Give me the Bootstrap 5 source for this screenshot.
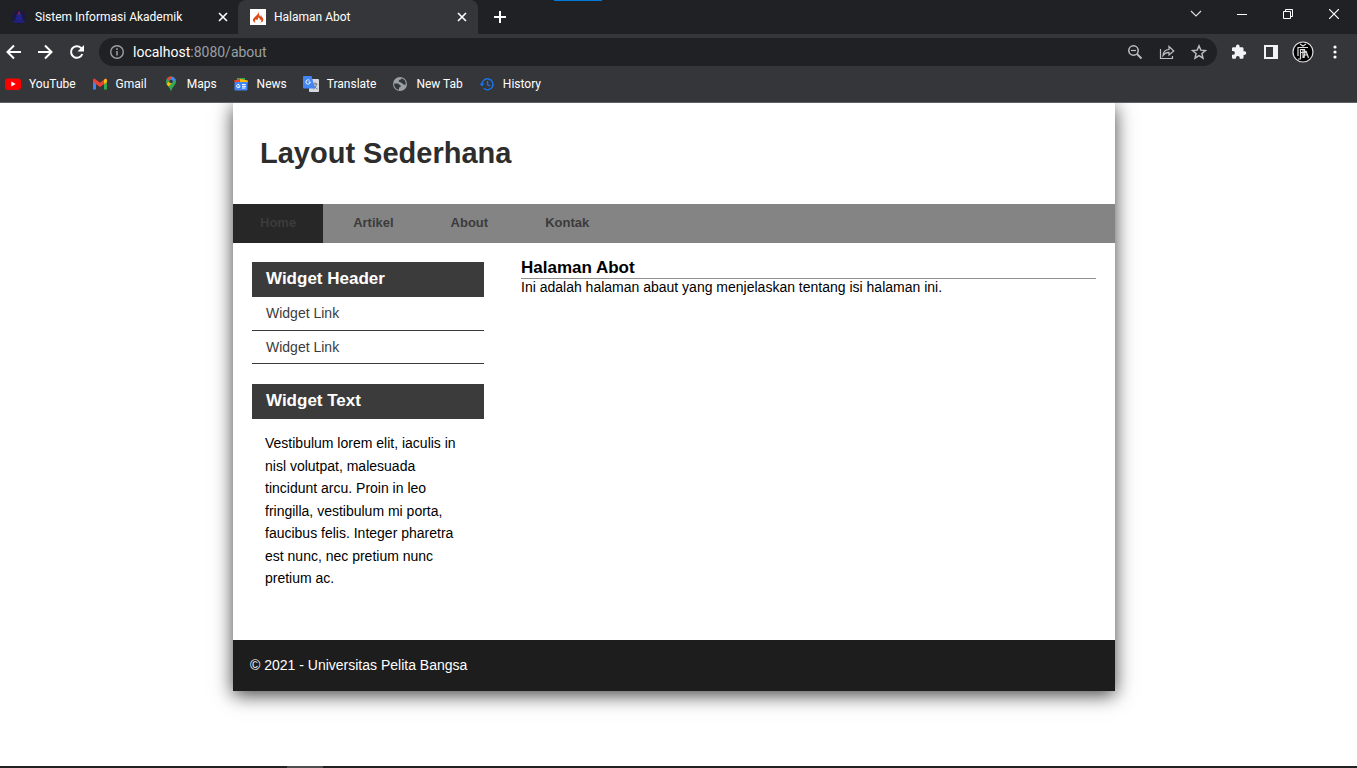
<!DOCTYPE html>
<html lang="id">
<head>
<meta charset="utf-8">
<meta name="viewport" content="width=device-width, initial-scale=1">
<title>Halaman Abot</title>
<link href="https://cdn.jsdelivr.net/npm/bootstrap@5.3.0/dist/css/bootstrap.min.css" rel="stylesheet">
<style>
  body { font-family: "Liberation Sans", Arial, sans-serif; font-size: 14px; color: #000; background: #fff; }
  .chrome { font-family: Roboto, "Open Sans", sans-serif; font-size: 12px; line-height: 16px; background: #35363a; color: #fff; border-bottom: 1px solid #5f6064; }
  .chrome button { border: 0; background: none; color: inherit; padding: 0; display: flex; align-items: center; justify-content: center; }
  .chrome svg, .chrome button { flex: none; }
  .tabstrip { background: #202124; height: 34px; }
  .tab-item { width: 240px; height: 34px; padding: 0 8px 0 12px; }
  .tab-item.first-tab { width: 238px; padding: 0 7px 0 11px; }
  .tab-item.active-tab { background: #35363a; border-radius: 8px 8px 0 0; }
  .tab-item button { width: 16px; height: 16px; }
  .loading-mark { left: 554px; top: 0; width: 48px; height: 1px; background: #0078d7; }
  .win-btn { width: 46px; height: 28px; }
  .toolbar { padding: 4px 6px 4px 0; gap: 0; }
  .nav-btn { width: 32px; height: 28px; }
  .nav-btn.back-btn { width: 29px; padding-right: 2px; }
  .omnibox { height: 28px; border-radius: 14px; background: #202124; padding: 0 10px; margin: 0 6px; }
  .url-text { font-size: 14px; line-height: 20px; }
  .url-rest { color: #9aa0a6; }
  .bookmarks { height: 32px; padding: 0 5px 4px; gap: 16px; }
  .bookmarks a { color: #fff; text-decoration: none; display: flex; align-items: center; gap: 8px; }
  .viewport { padding-right: 9px; padding-bottom: 32px; overflow: hidden; }
  .page { max-width: 882px; background: #fff; box-shadow: 0 4px 18px rgba(0,0,0,.75); }
  .page-head { padding: 30px 27px 31px; }
  .page-head h1 { font-size: 29px; line-height: 40px; font-weight: 700; color: #2d2d2d; margin: 0; }
  .site-nav { background: #848484; gap: 3px; }
  .site-nav a { display: block; padding: 9px 27px 10px; font-size: 13px; line-height: 20px; font-weight: 700; color: #3b3b3b; text-decoration: none; }
  .site-nav a.current { background: #272727; }
  .content { padding: 19px 19px 37px; gap: 37px; }
  .sidebar { width: 232px; flex: none; gap: 20px; }
  .widget h3 { background: #3b3b3b; color: #fff; font-size: 17px; line-height: 20px; font-weight: 700; padding: 7px 14px 8px; margin: 0; }
  .widget li a { display: block; padding: 6px 14px; line-height: 21px; color: #3b3b3b; text-decoration: none; border-bottom: 1px solid #3b3b3b; }
  .widget li:last-child a { padding-bottom: 5px; }
  .widget p { padding: 13px; margin: 0; line-height: 1.61; }
  .article h2 { font-size: 17px; line-height: 20px; font-weight: 700; margin: -4px 0 0; }
  .article hr { margin: 0; border: 0; border-top: 1px solid #8f8f8f; opacity: 1; }
  .article p { margin: 0; line-height: 17px; }
  .page-foot { background: #1d1d1d; color: #fff; padding: 15px 17px 16px; line-height: 20px; }
  .taskbar { height: 2px; background: #222; padding-left: 287px; }
  .taskbar div { width: 36px; height: 2px; background: #4f4f4f; }
</style>
</head>
<body class="d-flex flex-column min-vh-100">
<header class="chrome">
  <div class="tabstrip d-flex position-relative">
    <div class="tab-item first-tab d-flex align-items-center">
      <svg width="16" height="16" viewBox="0 0 16 16"><circle cx="8" cy="8" r="6.800" fill="#1a1845"/><path d="M5.500 5h5v3l1 1v2h-7V9l1-1zM2.500 11.500h11v2h-11z" fill="#22228a"/><path d="M7.300 2.500h1.600l.3 3H7z" fill="#8e2132"/></svg>
      <span class="flex-fill ps-2 tab-title">Sistem Informasi Akademik</span>
      <button aria-label="Tutup tab"><svg width="10" height="10" viewBox="0 0 10 10"><path d="M1 1l8 8M9 1L1 9" stroke="#fff" stroke-width="1.6"/></svg></button>
    </div>
    <div class="tab-item active-tab d-flex align-items-center">
      <svg width="16" height="16" viewBox="0 0 16 16"><path fill="#fff" d="M0 0h16v16H0z"/><path d="M7 2c2 1.500 1 3-.3 4.300C5 8 2.500 9.500 3 11.500c.3 1.200 1.300 2 2.700 2.300C4.500 12.500 4.800 11 6 10c.2 1 .8 1.200 1.300.8C8.500 10 8 8.800 7.800 8.200 9.500 8.800 10 9.800 9.800 11c.6.1 1-.2 1.100-.7.8 1.200.5 2.600-.9 3.500 2-.3 3.300-1.500 3.300-3.200 0-2-2-2.800-2.200-4.600-.6.400-.6 1.200-.5 1.700C8.500 6.500 9.800 4 7 2z" fill="#dd4814"/></svg>
      <span class="flex-fill ps-2 tab-title">Halaman Abot</span>
      <button aria-label="Tutup tab"><svg width="10" height="10" viewBox="0 0 10 10"><path d="M1 1l8 8M9 1L1 9" stroke="#fff" stroke-width="1.6"/></svg></button>
    </div>
    <button class="ms-3" aria-label="Tab baru"><svg width="12" height="12" viewBox="0 0 12 12"><path d="M6 0v12M0 6h12" stroke="#fff" stroke-width="2"/></svg></button>
    <div class="loading-mark position-absolute"></div>
    <div class="ms-auto d-flex">
      <button class="win-btn" aria-label="Cari tab"><svg width="12" height="8" viewBox="0 0 12 8"><path d="M1 1l5 5 5-5" fill="none" stroke="#ddd" stroke-width="1.200"/></svg></button>
      <button class="win-btn" aria-label="Minimalkan"><svg width="10" height="10" viewBox="0 0 10 10"><path d="M0 5.500h10" stroke="#fff"/></svg></button>
      <button class="win-btn" aria-label="Pulihkan"><svg width="10" height="10" viewBox="0 0 10 10"><path d="M.5 2.500h7v7h-7zM2.500 2.500v-2h7v7h-2" fill="none" stroke="#fff"/></svg></button>
      <button class="win-btn" aria-label="Tutup"><svg width="10" height="10" viewBox="0 0 10 10"><path d="M0 0l10 10M10 0L0 10" stroke="#fff" stroke-width="1.200"/></svg></button>
    </div>
  </div>
  <div class="toolbar d-flex align-items-center">
    <button class="nav-btn back-btn" aria-label="Kembali"><svg width="16" height="16" viewBox="0 0 16 16"><path d="M15 8H2M8 1.500L1.500 8 8 14.500" fill="none" stroke="#fff" stroke-width="2"/></svg></button>
    <button class="nav-btn" aria-label="Maju"><svg width="16" height="16" viewBox="0 0 16 16"><path d="M1 8h13M8 1.500L14.500 8 8 14.500" fill="none" stroke="#fff" stroke-width="2"/></svg></button>
    <button class="nav-btn" aria-label="Muat ulang"><svg width="16" height="16" viewBox="0 0 16 16"><path d="M13.300 10A5.800 5.800 0 1 1 12 3.900L14 6" fill="none" stroke="#fff" stroke-width="2"/><path d="M15 1v6.500H8.500z" fill="#fff"/></svg></button>
    <div class="omnibox flex-fill d-flex align-items-center">
      <svg width="16" height="16" viewBox="0 0 16 16"><circle cx="8" cy="8" r="6.300" fill="none" stroke="#9aa0a6" stroke-width="1.400"/><path d="M8 7v4.500M8 4.300V6" stroke="#9aa0a6" stroke-width="1.500"/></svg>
      <a href="#" class="url-text text-white text-decoration-none ps-2">localhost<span class="url-rest">:8080/about</span></a>
      <div class="ms-auto d-flex gap-3">
        <button aria-label="Zoom"><svg width="16" height="16" viewBox="0 0 16 16"><circle cx="6.500" cy="6.500" r="4.700" fill="none" stroke="#bdc1c6" stroke-width="1.500"/><path d="M10 10l4.500 4.500" stroke="#bdc1c6" stroke-width="1.800"/><path d="M4 6.500h5" stroke="#bdc1c6" stroke-width="1.200"/></svg></button>
        <button aria-label="Bagikan"><svg width="16" height="16" viewBox="0 0 16 16"><path d="M1.500 5v9.500h12V12M4 11.500C4.300 7.500 6.500 5.700 10 5.500V2.500L14.800 7 10 11V8.300C7.300 8.300 5.500 9.300 4 11.500z" fill="none" stroke="#bdc1c6" stroke-width="1.200"/></svg></button>
        <button aria-label="Markah"><svg width="16" height="16" viewBox="0 0 16 16"><path d="M8 1.800l1.800 4.300 4.700.4-3.600 3 1.100 4.700L8 11.700l-4 2.500 1.100-4.700-3.600-3 4.700-.4z" fill="none" stroke="#bdc1c6" stroke-width="1.400"/></svg></button>
      </div>
    </div>
    <button class="nav-btn" aria-label="Ekstensi"><svg width="16" height="16" viewBox="0 0 16 16"><path d="M13.500 7.300h-1V4.500c0-.7-.6-1.300-1.300-1.300H8.600V2.300a1.800 1.800 0 0 0-3.600 0v.9H2.300C1.600 3.200 1 3.800 1 4.500V7h1a1.900 1.900 0 0 1 0 3.800H1v2.700c0 .7.600 1.300 1.300 1.300h2.600v-1a1.900 1.900 0 0 1 3.800 0v1h2.500c.7 0 1.300-.6 1.300-1.300v-2.600h1a1.800 1.800 0 0 0 0-3.600z" fill="#f1f3f4"/></svg></button>
    <button class="nav-btn" aria-label="Panel samping"><svg width="14" height="14" viewBox="0 0 14 14"><path d="M0 0h14v14H0zM2 2v10h7V2z" fill="#f1f3f4" fill-rule="evenodd"/></svg></button>
    <button class="nav-btn" aria-label="Profil"><svg width="22" height="22" viewBox="0 0 22 22"><circle cx="11" cy="11" r="10" fill="#000" stroke="#ddd" stroke-width="1.200"/><path d="M8 3l3 2 3-2M6 6.500h10M6 6v9M8.500 8.500h4v3h-4zM8.500 12v6H6M11 9v8M12 17c.5-5 1-6 2-7M14 10l2.500 7M12.500 14h3" fill="none" stroke="#ddd" stroke-width="1.200"/></svg></button>
    <button class="nav-btn" aria-label="Menu"><svg width="4" height="14" viewBox="0 0 4 14" fill="#fff"><circle cx="2" cy="2" r="1.600"/><circle cx="2" cy="7" r="1.600"/><circle cx="2" cy="12" r="1.600"/></svg></button>
  </div>
  <nav class="bookmarks d-flex" aria-label="Markah">
    <a href="#"><svg width="16" height="16" viewBox="0 0 16 16"><rect y="2.500" width="16" height="11.500" rx="3" fill="#f00"/><path d="M6.300 5.600v5l4.400-2.500z" fill="#fff"/></svg>YouTube</a>
    <a href="#"><svg width="16" height="16" viewBox="0 0 16 16"><path d="M1 4v9.500h3V6z" fill="#4285f4"/><path d="M15 4v9.500h-3V6z" fill="#34a853"/><path d="M1 3.500L2.500 2.500 8 6.800l5.500-4.300L15 3.500V6l-7 5-7-5z" fill="#ea4335"/><path d="M12 4l1.500-1.500L15 4v2l-3 2z" fill="#fbbc04"/></svg>Gmail</a>
    <a href="#"><svg width="16" height="16" viewBox="0 0 16 16"><path d="M8 .5a5 5 0 0 1 5 5C13 9 9 11 8 15.500 7 11 3 9 3 5.500a5 5 0 0 1 5-5z" fill="#34a853"/><path d="M3.900 2.600A5 5 0 0 1 8 .5L9.500.8 6 5z" fill="#ea4335"/><path d="M9.500.8a5 5 0 0 1 3 2.600L9 7 7 4z" fill="#4285f4"/><path d="M3.500 8L7 4.500 9 7 5.500 10.500z" fill="#fbbc04"/><circle cx="8" cy="5.500" r="1.800" fill="#35363a"/></svg>Maps</a>
    <a href="#"><svg width="16" height="16" viewBox="0 0 16 16"><path d="M4 2h8v5H4z" fill="#34a853"/><path d="M1 4.500l8-2 2 5H2z" fill="#ea4335"/><path d="M7 3l8 1.500-1 4H7z" fill="#fbbc04"/><rect x="1.500" y="6" width="13" height="8.500" rx="1" fill="#4285f4"/><path d="M7 10H5.500M6.900 10A1.600 1.600 0 1 1 6.300 8.800M9 8.500h3.500M9 10.300h4M9 12h3.500" fill="none" stroke="#fff"/></svg>News</a>
    <a href="#"><svg width="16" height="16" viewBox="0 0 16 16"><rect x="6" y="3" width="10" height="13" rx="1" fill="#d5d8dc"/><path d="M9.500 8h5M12 6.500V8M13.500 8c-.5 2.500-1.500 4-3 5M11 9.500c1 2 2 3 3.500 3.500" fill="none" stroke="#70757a"/><path d="M1 0h7.500L12 12.500H1a1 1 0 0 1-1-1V1a1 1 0 0 1 1-1z" fill="#4285f4"/><path d="M5.500 6H7.300A2.200 2.200 0 1 1 6.500 4.300" fill="none" stroke="#fff"/></svg>Translate</a>
    <a href="#"><svg width="16" height="16" viewBox="0 0 16 16"><circle cx="8" cy="8" r="7" fill="#9aa0a6"/><path d="M2.200 7.500h3.300c1.500 0 1.500 1.700 3 1.700.8 1.500-.2 2-1.500 2.300V13.800C4 13.500 2 11 2.200 7.500zM9.500 2.300c0 1.800-2.700 1-2.700 2.700 0 1.500 2 1 3 2s2 2.300 4 1.500C14 5 12 3 9.500 2.300z" fill="#35363a"/></svg>New Tab</a>
    <a href="#"><svg width="16" height="16" viewBox="0 0 16 16"><path d="M3 8.500a5.500 5.500 0 1 1 1.700 3.800M8.500 5v3.500l2.500 1.500" fill="none" stroke="#1a73e8" stroke-width="1.400"/><path d="M.5 7.500h5L3 10.500z" fill="#1a73e8"/></svg>History</a>
  </nav>
</header>

<main class="viewport flex-fill">
  <div class="page mx-auto">
    <header class="page-head"><h1>Layout Sederhana</h1></header>
    <nav class="site-nav d-flex">
      <a href="#" class="current">Home</a>
      <a href="#">Artikel</a>
      <a href="#">About</a>
      <a href="#">Kontak</a>
    </nav>
    <div class="content d-flex">
      <aside class="sidebar d-flex flex-column">
        <section class="widget">
          <h3>Widget Header</h3>
          <ul class="list-unstyled mb-0">
            <li><a href="#">Widget Link</a></li>
            <li><a href="#">Widget Link</a></li>
          </ul>
        </section>
        <section class="widget">
          <h3>Widget Text</h3>
          <p>Vestibulum lorem elit, iaculis in nisl volutpat, malesuada tincidunt arcu. Proin in leo fringilla, vestibulum mi porta, faucibus felis. Integer pharetra est nunc, nec pretium nunc pretium ac.</p>
        </section>
      </aside>
      <section class="article flex-fill">
        <h2>Halaman Abot</h2>
        <hr>
        <p>Ini adalah halaman abaut yang menjelaskan tentang isi halaman ini.</p>
      </section>
    </div>
    <footer class="page-foot">© 2021 - Universitas Pelita Bangsa</footer>
  </div>
</main>
<div class="taskbar"><div></div></div>
<script src="https://cdn.jsdelivr.net/npm/bootstrap@5.3.0/dist/js/bootstrap.bundle.min.js"></script>
</body>
</html>
